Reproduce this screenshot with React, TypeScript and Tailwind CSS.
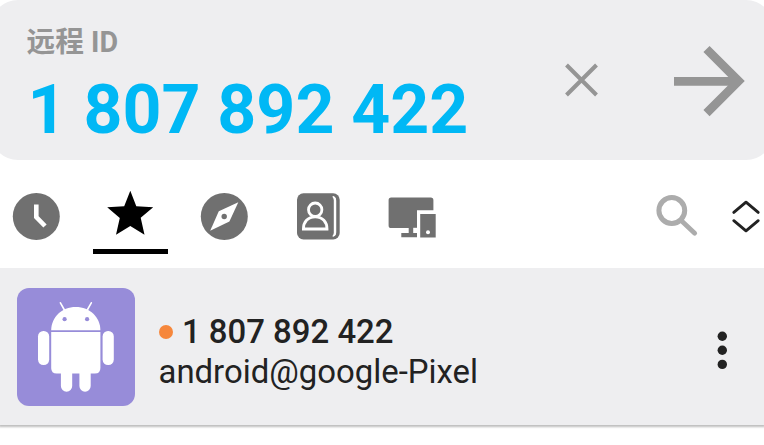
import type { ReactNode } from 'react';

function RemoteBar() {
  return (
    <section className="-mx-[9px] flex h-[160px] shrink-0 items-start rounded-[27px] bg-[#eeeef0] px-[9px]">
      <div className="flex flex-1 flex-col pl-[26.5px] pt-[28px]">
        <span className="text-[28.7px] leading-[28px] font-bold text-[#959595]">远程 ID</span>
        <span className="mt-[20px] pl-px text-[68px] leading-[68px] font-bold whitespace-nowrap text-[#00b8f5]">
          1 807 892 422
        </span>
      </div>
      <button aria-label="Clear" className="mt-[60px]">
        <svg className="block h-10 w-10" viewBox="0 0 40 40" fill="none" stroke="#959595" strokeWidth="4">
          <path d="M4.5 5 34.5 35M34.5 5 4.5 35" />
        </svg>
      </button>
      <button aria-label="Connect" className="mt-[40px] mr-[16px] ml-[68px]">
        <svg className="block h-20 w-[78px]" viewBox="670 40 78 80" fill="none" stroke="#959595" strokeWidth="8.7">
          <path d="M674 81.3H740" />
          <path d="M706.5 49 738.6 81.1 706.5 113.2" />
        </svg>
      </button>
    </section>
  );
}

function Tab({ active, children }: { active?: boolean; children: ReactNode }) {
  return (
    <button className="flex h-[85px] w-[75px] flex-col items-center justify-between">
      <div className="pt-[21px]">{children}</div>
      <span className={active ? 'h-[5px] w-full shrink-0 bg-black' : 'h-[5px] w-full shrink-0'} />
    </button>
  );
}

const icon = 'block h-[52px] w-[53px]';

function TabBar() {
  return (
    <nav className="flex h-[108px] shrink-0 items-start overflow-hidden pt-[9px]">
      <div className="-ml-px flex gap-[19px]">
        <Tab>
          <svg className={icon} viewBox="10 190 53 52">
            <circle cx="36.3" cy="216.5" r="23.5" fill="#707070" />
            <path d="M36.3 204.5V217L45 226" fill="none" stroke="#fff" strokeWidth="4.6" />
          </svg>
        </Tab>
        <Tab active>
          <svg className={icon} viewBox="104 190 53 52">
            <path
              d="M130.3 190.8 136.3 206.3 153.2 207.3 140.7 217.8 144.5 234.8 130.3 226 116 234.8 119.8 218 107.2 207.3 124.2 206.3Z"
              fill="#000"
            />
          </svg>
        </Tab>
        <Tab>
          <svg className={icon} viewBox="198 190 53 52">
            <circle cx="224.3" cy="216.5" r="23.5" fill="#707070" />
            <path d="M238.3 202.3 229.4 221.6 210.2 230.8 218.8 211.3Z" fill="#fff" />
            <circle cx="224.2" cy="216.5" r="2.7" fill="#707070" />
          </svg>
        </Tab>
        <Tab>
          <svg className={icon} viewBox="292 190 53 52">
            <rect x="297" y="193.3" width="42.7" height="46.2" rx="6.5" fill="#707070" />
            <path
              d="M332.7 196.6Q335.4 197.3 335.4 200.5V232.5Q335.4 235.5 332.7 236.2"
              fill="none"
              stroke="#fff"
              strokeWidth="1.3"
            />
            <path d="M332.7 196.2Q336.2 197 336.2 200.5V232.5Q336.2 235.8 332.7 236.5L333.8 233V200Z" fill="#fff" />
            <circle cx="315.2" cy="209.7" r="6.7" fill="none" stroke="#fff" strokeWidth="2.8" />
            <path
              d="M303.4 229C303.4 222 307.8 216.9 315.2 216.9S327 222 327 229Z"
              fill="none"
              stroke="#fff"
              strokeWidth="2.8"
            />
          </svg>
        </Tab>
        <Tab>
          <svg className={icon} viewBox="386 190 53 52">
            <path
              d="M391.2 197.6H430.8Q433.4 197.6 433.4 200.2V210.3H417V237.3H401.3V233H408.7V228H391.2Q388.6 228 388.6 225.4V200.2Q388.6 197.6 391.2 197.6Z"
              fill="#707070"
            />
            <path d="M413.2 227.8H417.2V233H413.2Z" fill="#fff" />
            <path d="M420.2 214H435.7V237.5H420.2Z" fill="#707070" />
            <circle cx="428" cy="232.2" r="2" fill="#fff" />
          </svg>
        </Tab>
      </div>
      <div className="ml-auto flex shrink-0 gap-[30px] pt-[20px]">
        <svg className="block h-[50px] w-[46px]" viewBox="654 189 46 50" fill="none" stroke="#acacac">
          <circle cx="671.8" cy="210.5" r="12.9" strokeWidth="5" />
          <path d="M682.5 221.7 694.7 233.2" strokeWidth="4.8" strokeLinecap="round" />
        </svg>
        <svg
          className="block h-[50px] w-[34px]"
          viewBox="730 189 34 50"
          fill="none"
          stroke="#222"
          strokeWidth="2.9"
          strokeLinecap="round"
          strokeLinejoin="round"
        >
          <path d="M733.8 212.4 746 202.2 758.2 212.4M733.8 220.7 746 230.8 758.2 220.7" />
        </svg>
      </div>
    </nav>
  );
}

function AndroidAvatar() {
  return (
    <div className="h-[118px] w-[118px] shrink-0 overflow-hidden rounded-[12px] bg-[#978cd9]">
      <svg className="block h-[118px] w-[118px]" viewBox="17.3 288 118 118" fill="#fff">
        <path d="M60.7 302.8 65.3 311M91.6 302.8 87 311" stroke="#fff" strokeWidth="1.6" strokeLinecap="round" />
        <path d="M51.5 330.3C51.5 317.5 62 307 76.1 307S100.7 317.5 100.7 330.3Z" />
        <circle cx="64.9" cy="319.2" r="2.1" fill="#978cd9" />
        <circle cx="87.4" cy="319.2" r="2.1" fill="#978cd9" />
        <path d="M51.5 332H100.7V368Q100.7 373.5 95.2 373.5H57Q51.5 373.5 51.5 368Z" />
        <rect x="38.3" y="331" width="11.2" height="34" rx="5.4" />
        <rect x="102.9" y="331" width="11.2" height="34" rx="5.4" />
        <path d="M61.2 372H72.5V386A5.65 5.65 0 0 1 61.2 386ZM79.7 372H91V386A5.65 5.65 0 0 1 79.7 386Z" />
      </svg>
    </div>
  );
}

function PeerRow() {
  return (
    <article className="flex h-[157px] shrink-0 items-start bg-[#eeeef0] pt-[20px] pl-[17px] shadow-[0_1px_2px_1px_rgba(0,0,0,0.26)] [clip-path:inset(0_0_-6px_0)]">
      <AndroidAvatar />
      <div className="flex flex-1 flex-col pt-[24px] pl-[23.5px] text-[32.9px] leading-[40px] whitespace-nowrap text-[#222]">
        <div className="flex items-center">
          <span className="mr-[9.5px] h-[14px] w-[14px] rounded-full bg-[#f6873c]" />
          <span className="font-medium">1 807 892 422</span>
        </div>
        <span>android@google-Pixel</span>
      </div>
      <button aria-label="More" className="mt-[43px] mr-[37px]">
        <svg className="block h-[40px] w-[10px]" viewBox="717 331 10 40" fill="#222">
          <circle cx="722.3" cy="336.2" r="4.7" />
          <circle cx="722.3" cy="350.3" r="4.7" />
          <circle cx="722.3" cy="364.4" r="4.7" />
        </svg>
      </button>
    </article>
  );
}

export default function App() {
  return (
    <main className="flex h-[445px] w-[764px] flex-col overflow-hidden bg-white font-['Roboto','Noto_Sans_CJK_SC',sans-serif]">
      <RemoteBar />
      <TabBar />
      <PeerRow />
    </main>
  );
}
